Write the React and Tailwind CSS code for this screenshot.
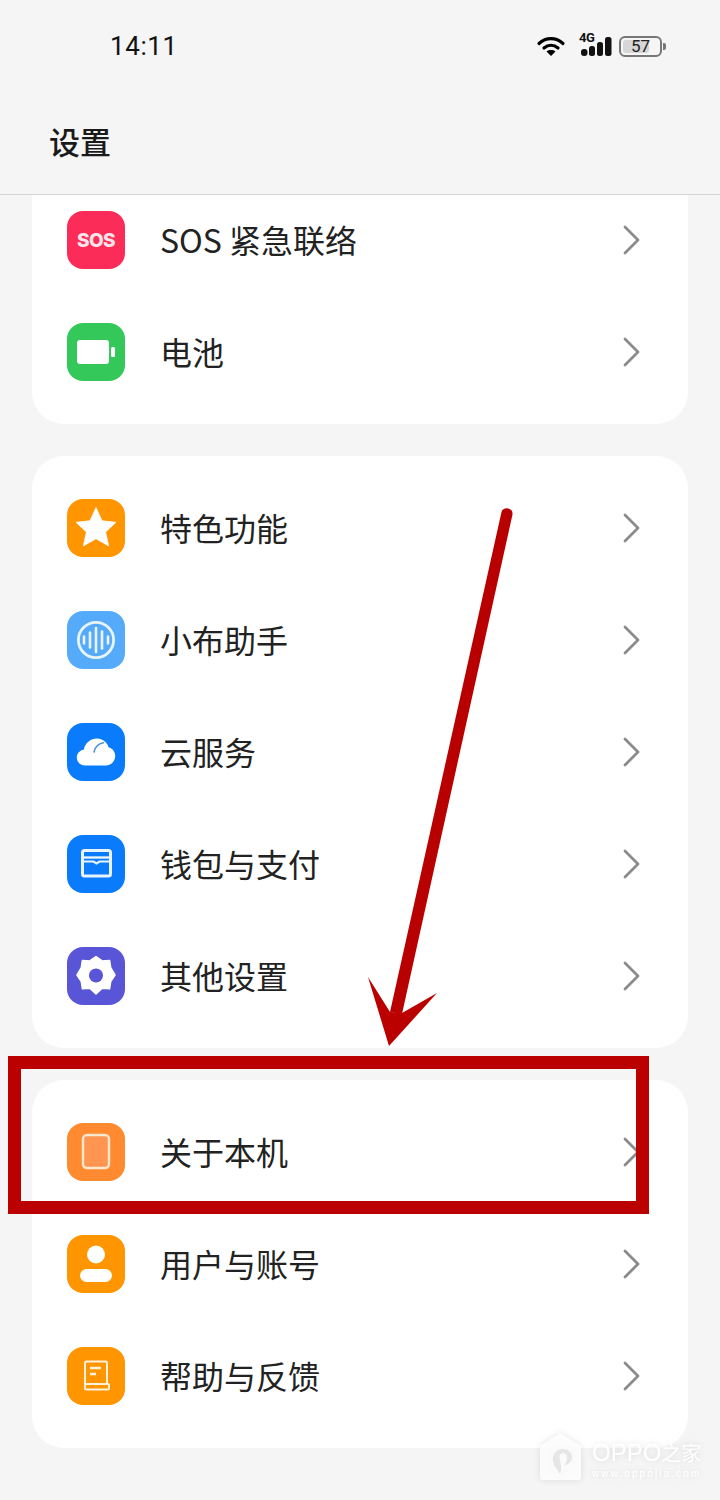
const font = { cjk: "font-['Noto_Sans_CJK_SC',sans-serif]" };

// --- Icons, all drawn on a 58x58 tile ---
const Tile = ({ bg, children }) => (
  <div className={`w-[58px] h-[58px] rounded-[16px] flex items-center justify-center flex-shrink-0 ${bg}`}>
    {children}
  </div>
);

const Glyph = ({ children }) => (
  <svg width="58" height="58" viewBox="0 0 58 58" fill="none">{children}</svg>
);

const SosIcon = () => (
  <Tile bg="bg-[#fb2d58]">
    <span className="font-['Inter',sans-serif] font-extrabold text-[19px] leading-none text-[#fde3ea] tracking-[-0.6px]">SOS</span>
  </Tile>
);

const BatteryIcon = () => (
  <Tile bg="bg-[#34c85a]">
    <Glyph>
      <rect x="10" y="17" width="32" height="24" rx="3" fill="#fff" />
      <rect x="44" y="24" width="4" height="10" rx="1.500" fill="#fff" />
    </Glyph>
  </Tile>
);

const StarIcon = () => (
  <Tile bg="bg-[#ff9500]">
    <Glyph>
      <path
        d="M29 8.500l6 13.300 14 1.500-10.400 9.700 3 13.900L29 39.700l-12.600 7.200 3-13.900L9 23.300l14-1.500z"
        fill="#fff"
        stroke="#fff"
        strokeWidth="0.800"
        strokeLinejoin="round"
      />
    </Glyph>
  </Tile>
);

const VoiceIcon = () => (
  <Tile bg="bg-[#55aaf9]">
    <Glyph>
      <circle cx="29" cy="29" r="17.600" stroke="#e8f4ff" strokeWidth="2.800" />
      <g stroke="#e8f4ff" strokeWidth="2.600" strokeLinecap="round">
        <path d="M17 25.500v7" />
        <path d="M23 21.500v15" />
        <path d="M29 17v24" />
        <path d="M35 20.500v17" />
        <path d="M41 25.500v7" />
      </g>
    </Glyph>
  </Tile>
);

const CloudIcon = () => (
  <Tile bg="bg-[#0a7bfb]">
    <Glyph>
      <path
        d="M18 42.500c-4.600 0-8.200-3.500-8.200-7.900 0-4 3-7.300 6.900-7.800C18 20.200 23.500 15.500 30 15.500c5.500 0 10.200 3.500 11.500 8.700 4 .9 6.700 4.600 6.700 8.900 0 5.200-4.200 9.400-9.400 9.400z"
        fill="#fff"
      />
      <path d="M27 29c.8-4.500 4.400-8.300 9.500-9.300" stroke="#4a90d8" strokeWidth="1.500" strokeLinecap="round" />
    </Glyph>
  </Tile>
);

const WalletIcon = () => (
  <Tile bg="bg-[#0a7bfb]">
    <Glyph>
      <rect x="15.500" y="15.500" width="28" height="25.500" rx="2" stroke="#e8f3ff" strokeWidth="3" />
      <path d="M16 22.500h27" stroke="#e8f3ff" strokeWidth="2.400" />
      <path d="M16 26.500h10.500l3 2 3-2H43" stroke="#e8f3ff" strokeWidth="2.200" />
    </Glyph>
  </Tile>
);

const GearIcon = () => (
  <Tile bg="bg-[#5856d6]">
    <Glyph>
      <path
        d="M29 9.500l6.200 4.400 7.400-.5 1.100 7.300 4.300 7.300-4.300 6.500-1.100 7.300-7.400-.5-6.200 5.700-6.200-5.700-7.400.5-1.100-7.300-4.300-6.500 4.300-7.300 1.100-7.300 7.400.5z"
        fill="#fff"
        stroke="#fff"
        strokeWidth="1.500"
        strokeLinejoin="round"
      />
      <circle cx="29" cy="28.500" r="7" fill="#5856d6" />
    </Glyph>
  </Tile>
);

const TabletIcon = () => (
  <Tile bg="bg-[#ff8a30]">
    <Glyph>
      <rect x="16" y="12" width="26" height="33" rx="4" fill="#ff9550" stroke="#ffe8d0" strokeWidth="2.400" />
    </Glyph>
  </Tile>
);

const UserIcon = () => (
  <Tile bg="bg-[#ff9500]">
    <Glyph>
      <circle cx="29" cy="19.500" r="9" fill="#fff" />
      <rect x="13" y="34" width="32" height="13" rx="6.500" fill="#fff" />
    </Glyph>
  </Tile>
);

const BookIcon = () => (
  <Tile bg="bg-[#ff9500]">
    <Glyph>
      <path d="M18 37V16a1.500 1.500 0 0 1 1.500-1.500h19a1.500 1.500 0 0 1 1.500 1.500v21" stroke="#fff1dc" strokeWidth="2" />
      <rect x="18" y="37" width="24" height="5.500" rx="1.500" stroke="#fff1dc" strokeWidth="2" />
      <path d="M23 21h11M23 27h6" stroke="#fff1dc" strokeWidth="2.400" />
    </Glyph>
  </Tile>
);

const Chevron = () => (
  <svg width="18" height="30" viewBox="0 0 18 30" fill="none" className="flex-shrink-0">
    <path d="M2 2l13 13L2 28" stroke="#8a8a8a" strokeWidth="2.800" strokeLinecap="round" strokeLinejoin="round" />
  </svg>
);

const Row = ({ icon, label }) => (
  <div className="h-[112px] flex items-center pl-[35px] pr-[47px]">
    {icon}
    <span className={`ml-[35px] flex-1 pb-[2px] text-[32px] leading-none text-[#222] ${font.cjk}`}>{label}</span>
    <Chevron />
  </div>
);

const Card = ({ items }) => (
  <div className="bg-white rounded-[32px] py-[16px]">
    {items.map((item) => (
      <Row key={item.label} icon={item.icon} label={item.label} />
    ))}
  </div>
);

const StatusIcons = () => (
  <div className="flex items-center gap-[13px]">
    <svg width="30" height="20" viewBox="0 0 30 20" fill="none">
      <g stroke="#000" strokeWidth="3.200" strokeLinecap="round">
        <path d="M3 7.500c7-6.400 17-6.400 24 0" />
        <path d="M8 12c4.200-3.500 9.800-3.500 14 0" />
      </g>
      <path d="M15 20l-4.500-4.600c2.700-1.900 6.300-1.900 9 0z" fill="#000" />
    </svg>
    <div className="relative w-[34px] h-[24px]">
      <span className="absolute left-0 top-[-3px] font-['Roboto',sans-serif] font-bold text-[13px] leading-[13px] tracking-[-0.5px] text-[#111]">4G</span>
      <svg className="absolute left-0 top-0" width="34" height="24" viewBox="0 0 34 24" fill="#111">
        <rect x="2" y="15" width="6.500" height="7" rx="3" />
        <rect x="10" y="12" width="6" height="10" rx="2.500" />
        <rect x="18" y="8" width="6" height="14" rx="2.500" />
        <rect x="26" y="3" width="6.500" height="19" rx="2.500" />
      </svg>
    </div>
    <div className="flex items-center gap-[1px] -ml-[7px]">
      <div className="w-[43px] h-[21px] rounded-[6px] border-2 border-[#777] p-[2px] relative flex items-center">
        <div className="w-[26px] h-full rounded-[3px] bg-[#d6d6d6]" />
        <span className="absolute inset-0 flex items-center justify-center font-['Roboto',sans-serif] text-[17px] leading-none text-[#222]">57</span>
      </div>
      <div className="w-[3px] h-[7px] rounded-r-[2px] bg-[#777]" />
    </div>
  </div>
);

const groups = [
  [
    { icon: <SosIcon />, label: 'SOS 紧急联络' },
    { icon: <BatteryIcon />, label: '电池' },
  ],
  [
    { icon: <StarIcon />, label: '特色功能' },
    { icon: <VoiceIcon />, label: '小布助手' },
    { icon: <CloudIcon />, label: '云服务' },
    { icon: <WalletIcon />, label: '钱包与支付' },
    { icon: <GearIcon />, label: '其他设置' },
  ],
  [
    { icon: <TabletIcon />, label: '关于本机' },
    { icon: <UserIcon />, label: '用户与账号' },
    { icon: <BookIcon />, label: '帮助与反馈' },
  ],
];

export default function App() {
  return (
    <div className="relative w-[720px] h-[1500px] overflow-hidden bg-[#f5f5f5] flex flex-col">
      {/* Header */}
      <header className="relative z-10 h-[195px] flex-shrink-0 bg-[#f5f5f5] border-b border-[#d4d4d4]">
        <div className="h-[92px] flex items-center justify-between pl-[110px] pr-[54px]">
          <span className="font-['Roboto',sans-serif] text-[26px] leading-none text-[#111] tracking-[0.6px]">14:11</span>
          <StatusIcons />
        </div>
        <h1 className={`pl-[49px] mt-[31px] text-[31px] leading-[36px] font-medium text-[#1a1a1a] ${font.cjk}`}>设置</h1>
      </header>

      {/* List, first card is scrolled partly under the header */}
      <main className="-mt-[27px] px-[32px] flex flex-col gap-[32px]">
        {groups.map((items) => (
          <Card key={items[0].label} items={items} />
        ))}
      </main>

      {/* Red annotation box */}
      <div className="absolute left-[8px] top-[1056px] w-[641px] h-[158px] border-[13px] border-[#bb0000]" />

      {/* Red annotation arrow */}
      <svg className="absolute left-[360px] top-[500px]" width="160" height="560" viewBox="360 500 160 560" fill="none">
        <path d="M512.500 514.500 L402 1014 L390 1012 L501.500 512 A5.700 5.700 0 0 1 512.500 514.500z" fill="#b90000" />
        <path d="M368 977 L390 1012 L402 1013 L437 993 L389 1046z" fill="#bb0000" />
      </svg>

      {/* Watermark */}
      <div className="absolute left-[540px] top-[1433px] flex gap-[11px] text-white drop-shadow-[0_0_3px_rgba(0,0,0,0.12)]">
        <svg width="41" height="47" viewBox="0 0 41 47" className="flex-shrink-0">
          <path d="M0 13 L20 0 L41 13 V44 a3 3 0 0 1-3 3 H3 a3 3 0 0 1-3-3z" fill="#fff" fillOpacity="0.85" />
          <path
            d="M20 41c-4-6-8-10-7-17 1-5 5-8 10-8 5 0 9 3 9 8 0 5-4 8-8 8 2-2 3-4 3-7 0-3-2-5-4-5-3 0-4 3-3 7 1 5 2 9 0 14z"
            fill="#e6e6e6"
          />
        </svg>
        <div className="flex flex-col pt-[6px]">
          <span className="font-['Liberation_Sans',sans-serif] text-[24px] leading-[28px] whitespace-nowrap">
            OPPO<span className={`text-[20px] ${font.cjk}`}>之家</span>
          </span>
          <span className="font-['Liberation_Sans',sans-serif] text-[10px] leading-[14px] tracking-[2.100px] whitespace-nowrap">www.oppojia.com</span>
        </div>
      </div>
    </div>
  );
}
